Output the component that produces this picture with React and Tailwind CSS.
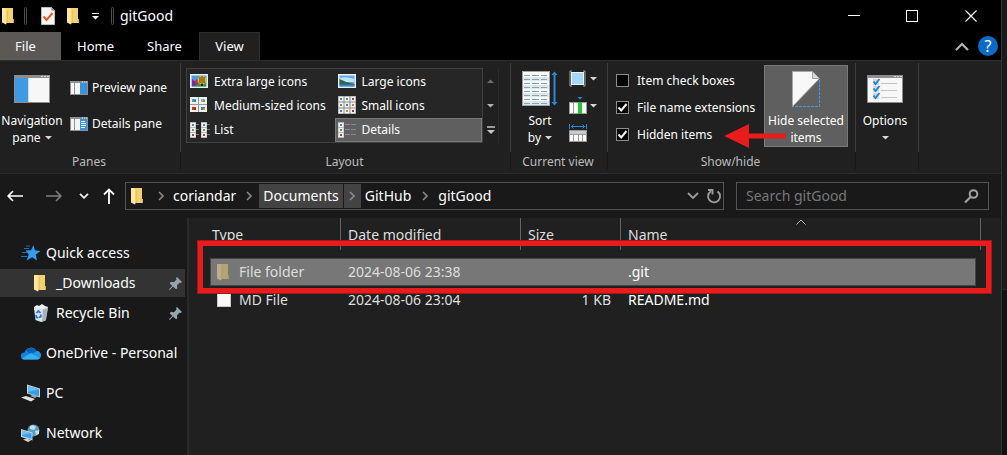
import React from "react";

function FolderIcon({ dim = false }) {
  return (
    <svg width="13" height="18" viewBox="0 0 13 18" className={dim ? "opacity-50" : ""} aria-hidden="true">
      <path d="M3 1h8v11h1v4H4z" fill="#f3d16f" />
      <path d="M11 12h1v4h-1z" fill="#d6a941" />
      <path d="M0 1h3l2 2v12l-1 2.500-4-2z" fill="#ffe79c" />
      <path d="M5 3v13" stroke="#e0b650" />
    </svg>
  );
}

function Caret({ className = "text-[#d8d8d8]" }) {
  return (
    <svg width="7" height="4" viewBox="0 0 7 4" className={`inline-block shrink-0 ${className}`} aria-hidden="true">
      <path d="M0 0h7L3.500 3.600z" fill="currentColor" />
    </svg>
  );
}

function Chevron() {
  return (
    <svg width="6" height="10" viewBox="0 0 6 10" aria-hidden="true">
      <path d="M1 1l4 4-4 4" fill="none" stroke="#8a8a8a" strokeWidth="1.6" />
    </svg>
  );
}

function WindowFrame({ children }) {
  return (
    <svg width="36" height="28" viewBox="0 0 36 28" aria-hidden="true">
      <rect width="36" height="28" fill="#8b8e91" />
      <rect x="1" y="3" width="34" height="24" fill="#f7f7f8" />
      <path d="M27 1.500h2M30 1.500h2M33 1.500h2" stroke="#d5d7d9" />
      {children}
    </svg>
  );
}

function NavigationPaneIcon() {
  return (
    <WindowFrame>
      <rect x="1" y="3" width="13" height="24" fill="#3f9ae4" />
      <path d="M14.500 3v24" stroke="#c9dff0" />
    </WindowFrame>
  );
}

function OptionsIcon() {
  return (
    <WindowFrame>
      {[7, 14, 21].map((y) => (
        <g key={y}>
          <rect x="6" y={y - 3} width="6" height="6" fill="#cfd8df" />
          <path d={`M6.500 ${y - 0.5}l2 2.500 4-5`} fill="none" stroke="#1f86da" strokeWidth="1.8" />
          <path d={`M14 ${y + 1.5}h16`} stroke="#c2c4c6" />
        </g>
      ))}
    </WindowFrame>
  );
}

function SmallPaneIcon({ details = false }) {
  return (
    <svg width="18" height="14" viewBox="0 0 18 14" aria-hidden="true">
      <rect width="18" height="14" fill="#8e9194" />
      <path d="M12 1h1M14 1h1M16 1h1" stroke="#e0e0e0" />
      <rect x="1" y="2" width="3" height="11" fill="#f5f5f5" />
      <rect x="5" y="2" width="5" height="11" fill="#f5f5f5" />
      <rect x="10" y="2" width="7" height="11" fill="#3494de" />
      {details && <path d="M11 4.500h4M11 6.500h5M11 8.500h5M11 10.500h4" stroke="#e9f4fc" />}
    </svg>
  );
}

function ExtraLargeIcon() {
  return (
    <svg width="18" height="14" viewBox="0 0 18 14" aria-hidden="true">
      <rect width="18" height="14" fill="#f0f0f0" />
      <rect x="1.500" y="1.500" width="15" height="11" fill="#4a9bea" />
      <path d="M2 9h14v3.500H2z" fill="#3e9438" />
      <path d="M2 5l3 2 2-2 1 5-3 2-3-1z" fill="#c62e50" />
      <path d="M2 7l3 1 1 3-4 1z" fill="#5434b0" />
      <ellipse cx="12" cy="6" rx="4" ry="4.200" fill="#f3bf18" />
      <path d="M10 3v6M12 2v8M14 3v6" stroke="#3d2a14" strokeWidth="0.900" />
      <rect x="11" y="10" width="2" height="2" fill="#222" />
    </svg>
  );
}

function LargeIcon() {
  return (
    <svg width="18" height="14" viewBox="0 0 18 14" aria-hidden="true">
      <rect width="18" height="14" fill="#f0f0f0" />
      <rect x="1.500" y="1.500" width="15" height="11" fill="#64a8ea" />
      <path d="M2 4q6-2 14 1v3H2z" fill="#c4e2f6" />
      <path d="M1.500 5q7 4 15 5v1h-15z" fill="#2d6458" />
      <path d="M1.500 10.500h15v2h-15z" fill="#3a86c8" />
    </svg>
  );
}

function Thumb({ x, y, fill, accent }) {
  return (
    <g>
      <rect x={x} y={y} width="8" height="7" fill="#f2f2f2" />
      <rect x={x + 2} y={y + 2} width="4" height="3" fill={fill} />
      <rect x={x + 4} y={y + 3} width="2" height="2" fill={accent} />
    </g>
  );
}

function MediumIcon() {
  return (
    <svg width="18" height="16" viewBox="0 0 18 16" aria-hidden="true">
      <rect width="17" height="15" fill="#9a9a9a" />
      <Thumb x={0} y={0} fill="#4a9fd0" accent="#3f8a80" />
      <Thumb x={9} y={0} fill="#7cb4dc" accent="#6fa548" />
      <Thumb x={0} y={8} fill="#c43a22" accent="#a32612" />
      <Thumb x={9} y={8} fill="#3579c8" accent="#c99422" />
    </svg>
  );
}

const tileColors = ["#3f86b8", "#5f9a58", "#c23a2a", "#5f9a58", "#3f86b8", "#b98a26", "#3f86b8", "#b98a26", "#b02a2a"];

function SmallIcon() {
  return (
    <svg width="18" height="18" viewBox="0 0 18 18" aria-hidden="true">
      <rect width="18" height="18" fill="#8c8c8c" />
      {tileColors.map((c, i) => (
        <g key={i}>
          <rect x={(i % 3) * 6 + 0.5} y={Math.floor(i / 3) * 6 + 0.5} width="5" height="5" fill="#f4f4f4" />
          <rect x={(i % 3) * 6 + 2} y={Math.floor(i / 3) * 6 + 2} width="2" height="2" fill={c} />
        </g>
      ))}
    </svg>
  );
}

function Strip({ x }) {
  return (
    <g>
      <rect x={x} width="6" height="16" fill="#b5b5b5" />
      {["#3f86b8", "#5f9a58", "#c23a2a"].map((c, i) => (
        <g key={c}>
          <rect x={x + 0.5} y={i * 5 + 1} width="5" height="4" fill="#f4f4f4" />
          <rect x={x + 2} y={i * 5 + 2} width="2" height="2" fill={c} />
        </g>
      ))}
    </g>
  );
}

function ListIcon() {
  return (
    <svg width="20" height="16" viewBox="0 0 20 16" aria-hidden="true">
      <Strip x={0} />
      <Strip x={11} />
      <path d="M6 2.500h3M6 7.500h3M6 12.500h3M17 2.500h3M17 7.500h3M17 12.500h3" stroke="#777" />
    </svg>
  );
}

function DetailsIcon() {
  return (
    <svg width="18" height="16" viewBox="0 0 18 16" aria-hidden="true">
      <Strip x={0} />
      <path d="M7 2.500h5M13 2.500h5M7 7.500h5M13 7.500h5M7 12.500h5M13 12.500h5" stroke="#8b8b8b" />
    </svg>
  );
}

function SortIcon() {
  return (
    <svg width="36" height="36" viewBox="0 0 36 36" aria-hidden="true">
      <rect x="0.500" y="0.500" width="27" height="34" fill="#fbfbfb" stroke="#a3a6a8" />
      {[4, 8, 12, 16, 20, 24, 28, 32].map((y, i) => (
        <g key={y}>
          {i % 2 === 1 && <rect x="1" y={y - 2} width="26" height="4" fill="#d5ebf8" />}
          <path d={`M2 ${y + 0.5}h6M10 ${y + 0.5}h7M19 ${y + 0.5}h6`} stroke="#9c9c9c" />
        </g>
      ))}
      <path d="M32.500 2v31" stroke="#2b8ad6" strokeWidth="2" />
      <path d="M29.500 4l3-3.500 3 3.500zM29.500 31l3 3.500 3-3.500z" fill="#2b8ad6" />
    </svg>
  );
}

function GroupByIcon() {
  return (
    <svg width="18" height="18" viewBox="0 0 18 18" aria-hidden="true">
      <rect x="2.500" y="2.500" width="12" height="12" fill="#a5d7fa" stroke="#e9f5fd" />
      <path d="M3 1H1v15h2M14 1h2v15h-2" fill="none" stroke="#a8a8a8" />
    </svg>
  );
}

function AddColumnsIcon() {
  return (
    <svg width="18" height="18" viewBox="0 0 18 18" aria-hidden="true">
      <path d="M8.500 0h5l-2.500 2.500z" fill="#2b8ad6" />
      <rect x="0" y="5" width="18" height="12" fill="#9a9a9a" />
      <path d="M1 6h3v10H1zM5 6h4v10H5zM13 6h4v10h-4z" fill="#fafafa" />
      <rect x="9" y="5" width="4" height="12" fill="#2ac13a" />
    </svg>
  );
}

function SizeColumnsIcon() {
  return (
    <svg width="18" height="18" viewBox="0 0 18 18" aria-hidden="true">
      <path d="M0.500 0v5M17.500 0v5M2 2.500h14M4.500 0.500l-2 2 2 2M13.500 0.500l2 2-2 2" fill="none" stroke="#2b8ad6" />
      <rect x="0" y="6" width="18" height="12" fill="#9a9a9a" />
      <path d="M1 7h16v3H1z" fill="#c9c9c9" />
      <path d="M1 11h3v6H1zM5 11h4v6H5zM10 11h3v6h-3zM14 11h3v6h-3z" fill="#fafafa" />
    </svg>
  );
}

function HideIcon() {
  return (
    <svg width="28" height="36" viewBox="0 0 28 36" aria-hidden="true">
      <path d="M0.500 0.500h20l7 7L0.500 35.500z" fill="#f8f8f8" stroke="#a8a8a8" />
      <path d="M20.500 0.500v7h7z" fill="#dcdcdc" stroke="#a0a0a0" />
      <path d="M27.500 9v26.500H1" fill="none" stroke="#3f9ae4" strokeDasharray="3 1" />
    </svg>
  );
}

function StarIcon() {
  return (
    <svg width="20" height="18" viewBox="0 0 20 18" aria-hidden="true">
      <path d="M12.500 1l1.300 5.300 5.700.7-4.700 3.500 1.200 6-4.800-3.300-5.700 3.300 2.300-6L4.500 6.500l5.500-.3z" fill="#2fa0f0" />
      <path d="M3 4.500h5M1 8.500h5M0 12.500h6M5 2h4" stroke="#1773bd" />
    </svg>
  );
}

function BinIcon() {
  return (
    <svg width="16" height="18" viewBox="0 0 16 18" aria-hidden="true">
      <path d="M1 3l3-2 2 1 3-2 3 2 3 1-1 3H1z" fill="#eef1f3" />
      <path d="M1 4l13.500 1L12.500 16.500 8 18l-5.500-2z" fill="#dce2e6" />
      <path d="M10 5l5-1-2 12-4 2z" fill="#a9b3ba" />
      <path d="M3.500 9l2-2 2 2M7.500 10.500l.5 2-2 1M3 11l.5 2.500h2" fill="none" stroke="#1878d2" strokeWidth="1.600" />
    </svg>
  );
}

function CloudIcon() {
  return (
    <svg width="20" height="13" viewBox="0 0 20 13" aria-hidden="true">
      <path d="M3 12.500a3.500 3.500 0 0 1 .5-7A6.500 6.500 0 0 1 15.500 4a4.300 4.300 0 0 1 1 8.500z" fill="#1681d8" />
      <path d="M5 3.500A6.300 6.300 0 0 1 15.500 4l-6 3z" fill="#0a62b5" />
      <path d="M1 11.500l9-5.500 9 5a3 3 0 0 1-2.500 1.500H3a3 3 0 0 1-2-1z" fill="#35b0f2" />
      <path d="M12 7.200L15.500 4a4.300 4.300 0 0 1 3.800 6.500z" fill="#2694e4" />
    </svg>
  );
}

function ComputerIcon() {
  return (
    <svg width="20" height="18" viewBox="0 0 20 18" aria-hidden="true">
      <path d="M6 .5l13 4v9L6 9.500z" fill="#c7d4dd" />
      <path d="M7 2l11 3.300v7L7 9z" fill="#329ced" />
      <path d="M7 2l11 3.300L7 8z" fill="#67bff8" />
      <path d="M9 12l4-1.500 4 1.500-3 2z" fill="#9aa6ae" />
      <path d="M0 13.500l5-1.500 9 3-4 2.500z" fill="#dfe4e7" />
    </svg>
  );
}

function NetworkIcon() {
  return (
    <svg width="20" height="18" viewBox="0 0 20 18" aria-hidden="true">
      <circle cx="12.500" cy="6.500" r="6" fill="#5e9bb8" />
      <path d="M9 2q4-2 6 1l-2 3-4-1zM14 7l4-1v4l-3 1z" fill="#bfe0ec" />
      <path d="M0 5l11.500 3.500v8L0 13z" fill="#c7d4dd" />
      <path d="M1 6.500l9.500 2.800v5.500L1 12z" fill="#35a0ee" />
      <path d="M1 6.500l9.500 2.800L1 11z" fill="#6cc2f8" />
      <path d="M2 15.500l4-1 4 2-3 1.500z" fill="#cdd4d8" />
    </svg>
  );
}

function PinIcon() {
  return (
    <svg width="13" height="13" viewBox="0 0 13 13" aria-hidden="true">
      <path d="M8 0l5 5-1.500 1-1-.3-2.500 2.500.3 3L7 12.300 4 9.500.8 13l-.8-.8L3.300 9 .7 6.200l1.200-1.400 3.100.4L7.500 2.600 7 1z" fill="#98a2a9" />
    </svg>
  );
}

function RibbonGroup({ label, width, children }) {
  return (
    <section className={`relative flex shrink-0 flex-col ${width}`} aria-label={label || "Options"}>
      <div className="flex h-[91px] pt-[2px]">
        <div className="flex min-w-0 flex-1 pt-[2px]">{children}</div>
        <span className="w-px bg-[#3f3f3f]" />
      </div>
      <div className="h-[18px] border-r border-[#181818] pr-[2px] text-center leading-5 text-[#bdbdbd]">{label}</div>
    </section>
  );
}

function BigButton({ icon, lines, caret, width, active = false }) {
  return (
    <button
      className={`flex h-[82px] shrink-0 flex-col items-center whitespace-nowrap leading-[17px] ${width} ${
        active ? "bg-[#5f5f5f] outline-1 -outline-offset-1 outline-[#7a7a7a]" : ""
      }`}
    >
      <span className="flex h-[47px] items-center">{icon}</span>
      <span>{lines[0]}</span>
      <span className="flex h-[17px] items-center gap-1">
        {lines[1]}
        {caret && <Caret />}
      </span>
    </button>
  );
}

const layouts = [
  ["Extra large icons", <ExtraLargeIcon />],
  ["Large icons", <LargeIcon />],
  ["Medium-sized icons", <MediumIcon />],
  ["Small icons", <SmallIcon />],
  ["List", <ListIcon />],
  ["Details", <DetailsIcon />],
];

function CheckRow({ id, label, checked }) {
  return (
    <div className="flex h-[27px] items-center gap-2">
      <span className="grid place-items-center">
        <input
          id={id}
          type="checkbox"
          defaultChecked={checked}
          className="peer col-start-1 row-start-1 size-[13px] appearance-none border border-[#8c8c8c] bg-black"
        />
        <svg width="11" height="11" viewBox="0 0 11 11" className="pointer-events-none invisible col-start-1 row-start-1 peer-checked:visible" aria-hidden="true">
          <path d="M1.500 5.500l2.700 3L9.500 2" fill="none" stroke="#f2f2f2" strokeWidth="2" />
        </svg>
      </span>
      <label htmlFor={id} className="whitespace-nowrap">{label}</label>
    </div>
  );
}

function TitleBar() {
  return (
    <header className="flex h-8 items-center bg-black">
      <div className="flex h-7 items-center pl-[2px]">
        <FolderIcon />
        <span className="ml-[9px] h-[18px] w-[3px] rounded-sm border border-[#4d4d4d]" />
        <button aria-label="Properties" className="ml-[14px]">
          <svg width="14" height="18" viewBox="0 0 14 18" aria-hidden="true">
            <path d="M.5.500h10l3 3v14H.5z" fill="#f5f5f5" stroke="#b9b9b9" />
            <path d="M10.500.500v3h3z" fill="#777" />
            <path d="M2.500 9.500l3 3.500L11.500 6" fill="none" stroke="#e8591c" strokeWidth="2" />
          </svg>
        </button>
        <button aria-label="New folder" className="ml-3"><FolderIcon /></button>
        <button aria-label="Customize toolbar" className="ml-3">
          <svg width="7" height="7" viewBox="0 0 7 7" aria-hidden="true">
            <path d="M0 .5h7" stroke="#fff" />
            <path d="M0 3h7L3.500 6.500z" fill="#fff" />
          </svg>
        </button>
        <span className="ml-3 h-[18px] w-[3px] rounded-sm border border-[#4d4d4d]" />
        <h1 className="ml-[6px] text-sm">gitGood</h1>
      </div>
      <div className="ml-auto flex h-[26px]">
        <button aria-label="Minimize" className="grid w-[58px] place-items-center">
          <svg width="12" height="12" viewBox="0 0 12 12"><path d="M0 5.500h12" stroke="#fff" /></svg>
        </button>
        <button aria-label="Maximize" className="grid w-[58px] place-items-center">
          <svg width="12" height="12" viewBox="0 0 12 12"><rect x=".5" y=".5" width="11" height="11" fill="none" stroke="#fff" /></svg>
        </button>
        <button aria-label="Close" className="grid w-[60px] place-items-center">
          <svg width="12" height="12" viewBox="0 0 12 12"><path d="M.5.500l11 11M11.500.500l-11 11" stroke="#fff" strokeWidth="1.200" /></svg>
        </button>
      </div>
    </header>
  );
}

function Tabs() {
  return (
    <nav className="flex h-7 bg-black text-[13px]" aria-label="Ribbon tabs">
      <button className="w-[61px] bg-[#5b5856] pr-[10px]">File</button>
      <button className="w-[69px]">Home</button>
      <button className="w-[69px]">Share</button>
      <button className="w-[61px] border-x border-t border-[#2e2e2e] bg-[#202020]">View</button>
      <div className="ml-auto flex items-center gap-[9px] pr-[3px]">
        <button aria-label="Collapse ribbon">
          <svg width="14" height="9" viewBox="0 0 14 9"><path d="M1 8l6-6 6 6" fill="none" stroke="#b4b4b4" strokeWidth="2.200" /></svg>
        </button>
        <button aria-label="Help" className="grid size-5 place-items-center rounded-full bg-[#0c6bc9] text-base leading-5">?</button>
      </div>
    </nav>
  );
}

function Ribbon() {
  return (
    <div className="flex h-[114px] overflow-hidden border-y border-[#2e2e2e] bg-[#202020] text-[12px]">
      <RibbonGroup label="Panes" width="w-[181px]">
        <BigButton icon={<NavigationPaneIcon />} lines={["Navigation", "pane"]} caret width="w-[64px]" />
        <div className="flex flex-col pl-[6px] pt-[5px]">
          <button className="flex h-9 items-center gap-1 whitespace-nowrap"><SmallPaneIcon />Preview pane</button>
          <button className="flex h-9 items-center gap-1 whitespace-nowrap"><SmallPaneIcon details />Details pane</button>
        </div>
      </RibbonGroup>

      <RibbonGroup label="Layout" width="w-[330px]">
        <div className="ml-[5px] mt-[3px] grid h-[75px] w-[297px] grid-cols-2 grid-rows-3 border border-[#404040] bg-[#262626]">
          {layouts.map(([name, icon]) => (
            <button
              key={name}
              className={`flex items-center gap-[2px] whitespace-nowrap pl-[3px] ${
                name === "Details" ? "bg-[#5f5f5f] outline-1 -outline-offset-1 outline-[#7a7a7a]" : ""
              }`}
            >
              <span className="w-[22px]">{icon}</span>
              {name}
            </button>
          ))}
        </div>
        <div className="mt-[3px] flex h-[75px] w-4 flex-col border-r border-[#2a2a2a]">
          <button aria-label="Scroll up" className="grid flex-1 place-items-center"><Caret className="rotate-180 text-[#6c6c6c]" /></button>
          <button aria-label="Scroll down" className="grid flex-1 place-items-center"><Caret className="text-[#b4b4b4]" /></button>
          <button aria-label="More layouts" className="grid flex-1 place-items-center">
            <svg width="8" height="9" viewBox="0 0 8 9"><path d="M0 1h8" stroke="#c4c4c4" strokeWidth="1.500" /><path d="M0 4h8L4 8z" fill="#c4c4c4" /></svg>
          </button>
        </div>
      </RibbonGroup>

      <RibbonGroup label="Current view" width="w-[97px]">
        <BigButton icon={<SortIcon />} lines={["Sort", "by"]} caret width="w-[58px]" />
        <div className="flex flex-col">
          <button aria-label="Group by" className="flex h-[27px] items-center gap-[3px]"><GroupByIcon /><Caret /></button>
          <button aria-label="Add columns" className="flex h-[27px] items-center gap-[3px]"><AddColumnsIcon /><Caret /></button>
          <button aria-label="Size all columns to fit" className="flex h-[27px] items-center"><SizeColumnsIcon /></button>
        </div>
      </RibbonGroup>

      <RibbonGroup label="Show/hide" width="w-[248px]">
        <div className="flex w-[156px] flex-col pl-2 pt-[2px]">
          <CheckRow id="item-boxes" label="Item check boxes" checked={false} />
          <CheckRow id="extensions" label="File name extensions" checked />
          <CheckRow id="hidden" label="Hidden items" checked />
        </div>
        <BigButton icon={<HideIcon />} lines={["Hide selected", "items"]} width="w-[84px]" active />
        <svg className="pointer-events-none absolute left-[116px] top-[62px]" width="64" height="26" viewBox="0 0 64 26" aria-hidden="true">
          <path d="M0 13L25 1v9.500h37v5H25V25z" fill="#e81c1c" />
        </svg>
      </RibbonGroup>

      <RibbonGroup label="" width="w-[63px]">
        <BigButton icon={<OptionsIcon />} lines={["Options", ""]} caret width="w-[58px]" />
      </RibbonGroup>
    </div>
  );
}

function AddressBar() {
  return (
    <div className="flex h-11 items-center bg-[#191919] pl-[7px] pr-3 text-sm">
      <button aria-label="Back">
        <svg width="16" height="12" viewBox="0 0 16 12"><path d="M16 6H1.500M6 1L1.200 6 6 11" fill="none" stroke="#fff" strokeWidth="1.700" /></svg>
      </button>
      <button aria-label="Forward" className="ml-[23px]">
        <svg width="16" height="12" viewBox="0 0 16 12"><path d="M0 6h14.500M10 1l4.800 5L10 11" fill="none" stroke="#7d7d7d" strokeWidth="1.700" /></svg>
      </button>
      <button aria-label="Recent locations" className="ml-[17px]">
        <svg width="10" height="6" viewBox="0 0 10 6"><path d="M1 .8l4 4 4-4" fill="none" stroke="#eee" strokeWidth="1.800" /></svg>
      </button>
      <button aria-label="Up" className="ml-[14px]">
        <svg width="12" height="16" viewBox="0 0 12 16"><path d="M6 16V1.500M1 6.500l5-5 5 5" fill="none" stroke="#fff" strokeWidth="1.800" /></svg>
      </button>
      <div className="ml-[10px] flex h-7 min-w-0 flex-1 items-center border border-[#545454] pl-[5px]">
        <FolderIcon />
        <span className="ml-[14px]"><Chevron /></span>
        <button className="ml-[9px]">coriandar</button>
        <span className="ml-[10px]"><Chevron /></span>
        <button className="ml-[7px] h-6 bg-[#434343] px-1">Documents</button>
        <span className="ml-px grid h-6 w-[17px] place-items-center bg-[#434343]"><Chevron /></span>
        <button className="ml-1">GitHub</button>
        <span className="ml-[11px]"><Chevron /></span>
        <button className="ml-[10px]">gitGood</button>
        <button aria-label="Previous locations" className="ml-auto">
          <svg width="12" height="8" viewBox="0 0 12 8"><path d="M1 1l5 5 5-5" fill="none" stroke="#9b9b9b" strokeWidth="1.900" /></svg>
        </button>
        <button aria-label="Refresh" className="ml-[7px] mr-[1px]">
          <svg width="16" height="16" viewBox="0 0 16 16"><path d="M5 3.200A6 6 0 1 0 11.500 3.400" fill="none" stroke="#9b9b9b" strokeWidth="1.900" /><path d="M2 2h4.500v4.500" fill="none" stroke="#9b9b9b" strokeWidth="1.900" /></svg>
        </button>
      </div>
      <div className="ml-3 flex h-7 w-[253px] items-center border border-[#545454] px-[9px]">
        <input aria-label="Search gitGood" placeholder="Search gitGood" className="min-w-0 flex-1 bg-transparent outline-none placeholder:text-[#787878]" />
        <svg width="15" height="15" viewBox="0 0 15 15" aria-hidden="true"><circle cx="9.500" cy="5" r="3.800" fill="none" stroke="#a2a2a2" strokeWidth="2" /><path d="M6.500 8L1 13.500" stroke="#a2a2a2" strokeWidth="2.200" /></svg>
      </div>
    </div>
  );
}

function SideItem({ icon, name, child = false, pinned = false, selected = false }) {
  return (
    <a
      href="#"
      className={`flex h-7 items-center gap-[5px] whitespace-nowrap pr-[3px] ${child ? "pl-[31px]" : "pl-[21px]"} ${selected ? "bg-[#333]" : ""}`}
    >
      <span className={child ? "flex w-5 shrink-0" : "flex w-5 shrink-0 justify-center"}>{icon}</span>
      {name}
      {pinned && <span className="ml-auto"><PinIcon /></span>}
    </a>
  );
}

function Sidebar() {
  return (
    <aside className="flex w-[189px] shrink-0 flex-col gap-3 border-r-2 border-[#2a2a2a] bg-[#191919] pr-[2px] pt-[21px]">
      <div className="flex flex-col gap-[2px]">
        <SideItem icon={<StarIcon />} name="Quick access" />
        <SideItem icon={<span className="pl-[3px]"><FolderIcon /></span>} name="_Downloads" child pinned selected />
        <SideItem icon={<span className="pl-[2px]"><BinIcon /></span>} name="Recycle Bin" child pinned />
      </div>
      <SideItem icon={<CloudIcon />} name="OneDrive - Personal" />
      <SideItem icon={<ComputerIcon />} name="PC" />
      <SideItem icon={<NetworkIcon />} name="Network" />
    </aside>
  );
}

function HeaderCell({ children, first = false }) {
  return <div className={`h-8 border-r border-[#636363] pt-[7px] leading-5 ${first ? "pl-[2px]" : "pl-[7px]"}`}>{children}</div>;
}

function FileList() {
  const sel = "border-y border-[#454545] bg-[#777]";
  return (
    <main className="relative min-w-0 flex-1 bg-[#202020] pl-[21px] pr-5">
      <table className="w-full table-fixed border-separate border-spacing-0 text-left text-[#dedede]">
        <colgroup>
          <col className="w-[131px]" />
          <col className="w-[180px]" />
          <col className="w-[100px]" />
          <col />
          <col className="w-[5px]" />
        </colgroup>
        <thead>
          <tr className="h-10 align-top">
            <th className="p-0 font-normal"><HeaderCell first>Type</HeaderCell></th>
            <th className="p-0 font-normal"><HeaderCell>Date modified</HeaderCell></th>
            <th className="p-0 font-normal"><HeaderCell>Size</HeaderCell></th>
            <th className="relative p-0 font-normal" colSpan={2}>
              <HeaderCell>Name</HeaderCell>
              <svg className="absolute left-1/2 top-px -translate-x-1/2" width="10" height="6" viewBox="0 0 10 6" aria-hidden="true"><path d="M.5 5.500L5 1l4.500 4.500" fill="none" stroke="#b8b8b8" /></svg>
            </th>
          </tr>
        </thead>
        <tbody>
          <tr className="h-7">
            <td className={`border-l p-0 ${sel}`}><div className="flex items-center gap-[9px] pl-[6px]"><FolderIcon dim />File folder</div></td>
            <td className={`p-0 pl-[7px] ${sel}`}>2024-08-06 23:38</td>
            <td className={`p-0 ${sel}`} />
            <td className={`border-r p-0 pl-[7px] text-white ${sel}`}>.git</td>
            <td className="p-0" />
          </tr>
          <tr className="h-7">
            <td className="p-0"><div className="flex items-center gap-2 pl-[7px]"><span className="size-[14px] border border-[#c8c8c8] bg-[#f7f7f7]" />MD File</div></td>
            <td className="p-0 pl-[7px]">2024-08-06 23:04</td>
            <td className="p-0 pr-[10px] text-right">1 KB</td>
            <td className="p-0 pl-[7px] text-white">README.md</td>
            <td className="p-0" />
          </tr>
        </tbody>
      </table>
      <div className="pointer-events-none absolute left-2 right-[9px] top-[22px] h-[54px] border-[6px] border-[#e81c1c] outline-1 -outline-offset-1 outline-[#a01818]" />
    </main>
  );
}

export default function App() {
  return (
    <div className="flex min-h-screen bg-[#191919] font-['Noto_Sans','Open_Sans',sans-serif] text-sm text-white">
      <div className="flex min-w-0 flex-1 flex-col">
        <TitleBar />
        <Tabs />
        <Ribbon />
        <AddressBar />
        <div className="flex flex-1">
          <Sidebar />
          <FileList />
        </div>
      </div>
      <div className="flex w-[6px] shrink-0 flex-col border-l border-[#333] bg-[#121212]">
        <span className="h-[290px] border-b border-[#2a2a2a] bg-[#1a1a1a]" />
      </div>
    </div>
  );
}
